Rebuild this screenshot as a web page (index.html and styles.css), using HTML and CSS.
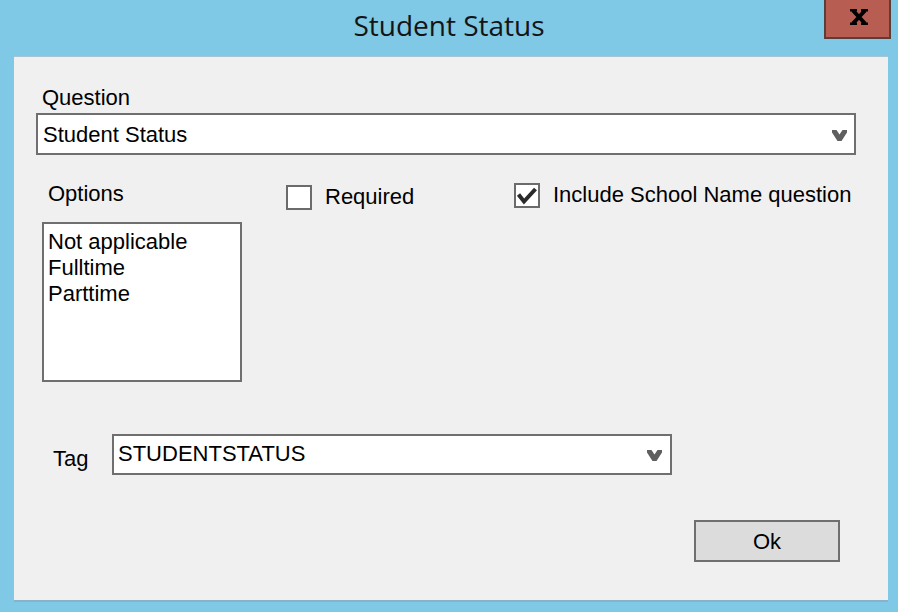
FILE: index.html
```html
<!DOCTYPE html>
<html lang="en">
<head>
    <meta charset="UTF-8">
    <meta name="viewport" content="width=device-width, initial-scale=1.0">
    <title>Student Status</title>
    <link rel="stylesheet" href="styles.css">
</head>
<body>

    <div class="window">
        <!-- Barra de titulo -->
        <div class="titlebar">
            <h1 class="title">Student Status</h1>
            <button class="close-btn" type="button" aria-label="Close">
                <svg width="18" height="16" viewBox="0 0 18 16">
                    <path d="M3 1.5L15 14.5M15 1.5L3 14.5" stroke="#000" stroke-width="4" fill="none"/>
                    <rect x="0" y="0" width="7" height="2.5" fill="#000"/>
                    <rect x="11" y="0" width="7" height="2.5" fill="#000"/>
                    <rect x="0" y="13.5" width="7" height="2.5" fill="#000"/>
                    <rect x="11" y="13.5" width="7" height="2.5" fill="#000"/>
                </svg>
            </button>
        </div>

        <div class="client">
            <label class="lbl lbl-question">Question</label>
            <div class="combo combo-question">
                <span class="combo-text">Student Status</span>
                <svg class="chevron" width="15" height="12" viewBox="0 0 15 12">
                    <polygon points="0,0 4.5,0 7.5,4.5 10.5,0 15,0 15,2.5 9.5,11 5.5,11 0,2.5" fill="#5f5f5f"/>
                </svg>
            </div>

            <div class="middle">
                <div class="options-col">
                    <div class="lbl lbl-options">Options</div>
                    <ul class="listbox">
                        <li>Not applicable</li>
                        <li>Fulltime</li>
                        <li>Parttime</li>
                    </ul>
                </div>

                <label class="check check-required">
                    <span class="box"></span>
                    <span>Required</span>
                </label>

                <label class="check check-include">
                    <span class="box">
                        <svg width="22" height="21" viewBox="0 0 22 21">
                            <polyline points="2.5,9.5 8,16.5 19.5,4" fill="none" stroke="#2a2a2a" stroke-width="4"/>
                        </svg>
                    </span>
                    <span>Include School Name question</span>
                </label>
            </div>

            <div class="tag-row">
                <label class="lbl lbl-tag">Tag</label>
                <div class="combo combo-tag">
                    <span class="combo-text">STUDENTSTATUS</span>
                    <svg class="chevron" width="15" height="12" viewBox="0 0 15 12">
                        <polygon points="0,0 4.5,0 7.5,4.5 10.5,0 15,0 15,2.5 9.5,11 5.5,11 0,2.5" fill="#5f5f5f"/>
                    </svg>
                </div>
            </div>

            <div class="actions">
                <button class="ok-btn" type="button">Ok</button>
            </div>
        </div>
    </div>

</body>
</html>
```

FILE: styles.css
```css
/* General */
body {
    margin: 0;
    background-color: #7fc8e6;
    font-family: "Liberation Sans", Arial, sans-serif;
    font-size: 22px;
    color: #000;
}

.window {
    width: 898px;
    height: 612px;
    display: flex;
    flex-direction: column;
}

/* Barra de titulo */
.titlebar {
    height: 56px;
    display: grid;
    grid-template-columns: 1fr auto 1fr;
    align-items: start;
}

.title {
    grid-column: 2;
    margin: 8px 0 0;
    font: 400 28px/34px "Open Sans", "Noto Sans", sans-serif;
    color: #141414;
}

.close-btn {
    grid-column: 3;
    justify-self: end;
    margin-right: 7px;
    width: 67px;
    height: 39px;
    padding: 0 0 3px 3px;
    background-color: #b75d52;
    border: 2px solid #5c3d3a;
    border-top: none;
    display: flex;
    align-items: center;
    justify-content: center;
}

/* Area cliente */
.client {
    margin: 0 10px 0 14px;
    height: 543px;
    background-color: #f0f0f0;
    border-top: 1px solid #a9c3d1;
    border-bottom: 2px solid #87b2ca;
}

.lbl {
    display: block;
    line-height: 30px;
    white-space: nowrap;
}

.lbl-question {
    margin: 26px 0 0 28px;
}

.combo {
    box-sizing: border-box;
    display: flex;
    align-items: flex-start;
    justify-content: space-between;
    background-color: #fff;
    border: 2px solid #6f6f6f;
    line-height: 30px;
}

.combo-question {
    margin-left: 22px;
    width: 820px;
    height: 42px;
    padding: 5px 7px 0 5px;
}

.combo-question .chevron {
    margin-top: 10px;
}

/* Opciones y casillas */
.middle {
    display: flex;
    align-items: flex-start;
    margin-top: 24px;
}

.options-col {
    flex: none;
    width: 200px;
    margin-left: 28px;
}

.lbl-options {
    padding-left: 6px;
}

.listbox {
    box-sizing: border-box;
    width: 200px;
    height: 160px;
    margin: 13px 0 0;
    padding: 5px 0 0 4px;
    list-style: none;
    background-color: #fff;
    border: 2px solid #6f6f6f;
    line-height: 26px;
}

.check {
    display: flex;
    align-items: center;
    gap: 13px;
    line-height: 30px;
    white-space: nowrap;
}

.check-required {
    flex: none;
    width: 228px;
    margin: 3px 0 0 44px;
}

.check-include {
    margin-top: 1px;
}

.box {
    box-sizing: border-box;
    flex: none;
    width: 26px;
    height: 25px;
    background-color: #fff;
    border: 2px solid #6b6b6b;
    display: flex;
}

/* Etiqueta */
.tag-row {
    display: flex;
    align-items: flex-start;
    margin-top: 52px;
    padding-left: 39px;
}

.lbl-tag {
    flex: none;
    width: 59px;
    margin-top: 10px;
}

.combo-tag {
    width: 560px;
    height: 41px;
    padding: 3px 8px 0 4px;
}

.combo-tag .chevron {
    margin-top: 11px;
}

/* Boton */
.actions {
    margin-top: 45px;
    padding-left: 680px;
}

.ok-btn {
    box-sizing: border-box;
    width: 146px;
    height: 42px;
    padding: 2px 0 0;
    background-color: #dcdcdc;
    border: 2px solid #6f6f6f;
    font: inherit;
    line-height: 30px;
    color: #000;
}
```
